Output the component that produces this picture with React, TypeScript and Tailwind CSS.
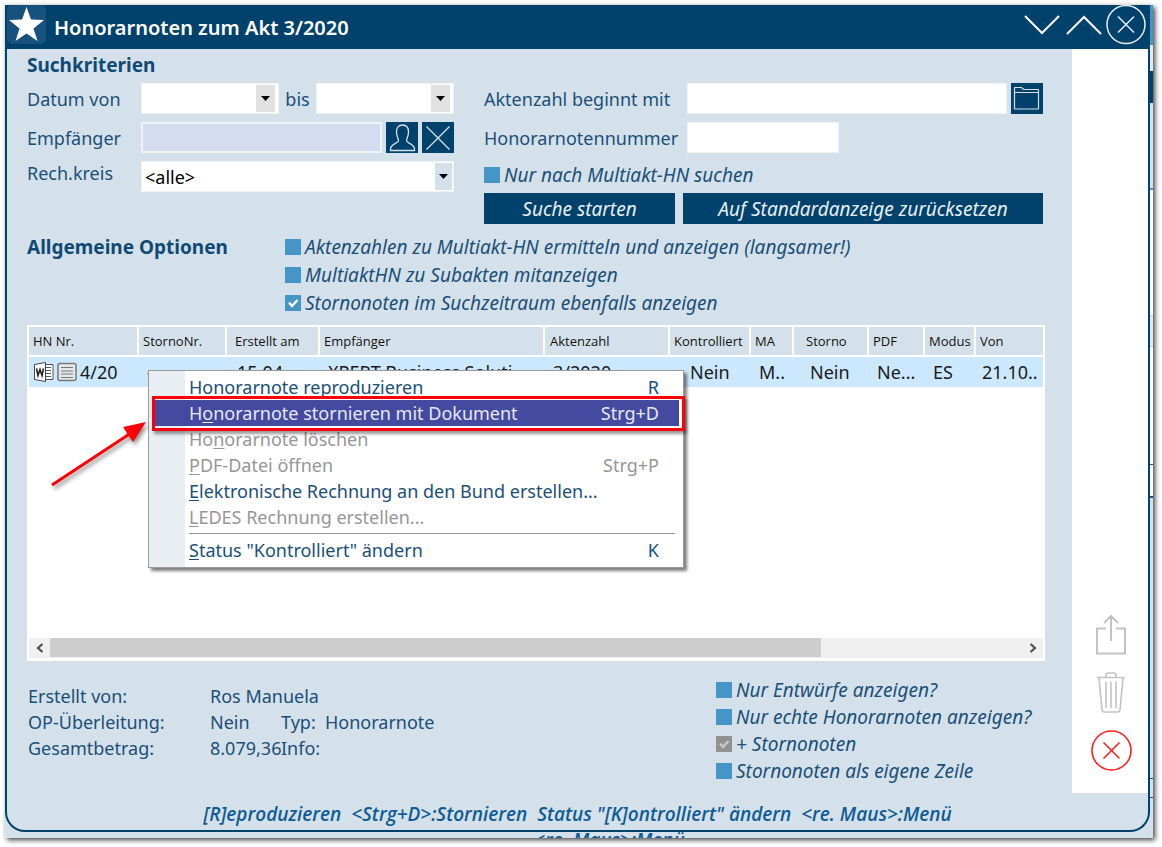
import React, { useState } from "react";

function Check({ label, checked = false, disabled = false }: { label: string; checked?: boolean; disabled?: boolean }) {
  const [on, setOn] = useState(checked);
  return (
    <label className="flex items-center gap-1 text-[19px] leading-6 italic whitespace-nowrap">
      <span className="grid shrink-0">
        <input
          type="checkbox"
          checked={on}
          disabled={disabled}
          onChange={(e) => setOn(e.target.checked)}
          className="col-start-1 row-start-1 size-4 appearance-none bg-[#4595c6] disabled:bg-[#919191]"
        />
        {on && (
          <svg viewBox="0 0 16 16" className="pointer-events-none col-start-1 row-start-1 size-4" fill="none">
            <path d="M4 7.5 7 11l5.5-6" stroke={disabled ? "#c8c8c8" : "#fff"} strokeWidth="2.4" />
          </svg>
        )}
      </span>
      {label}
    </label>
  );
}

function Dropdown({ label, value = "", tone = "date" }: { label: string; value?: string; tone?: "date" | "list" }) {
  return (
    <span className="relative block min-w-0 flex-1">
      <select aria-label={label} className="block h-[31px] w-full appearance-none border border-[#eef3f7] bg-white px-[3px] text-black">
        <option>{value}</option>
      </select>
      <span
        className={
          tone === "date"
            ? "pointer-events-none absolute inset-y-0.5 right-1 flex w-[19px] items-center justify-center bg-[#e1e1e1]"
            : "pointer-events-none absolute inset-y-0.5 right-0.5 flex w-[17px] items-center justify-center bg-[#d5e1ea]"
        }
      >
        <svg viewBox="0 0 9 5" className="h-[5px] w-[9px]">
          <path d="M0 0h9L4.500 5z" fill="#000" />
        </svg>
      </span>
    </span>
  );
}

function IconButton({ label, children }: { label: string; children: React.ReactNode }) {
  return (
    <button aria-label={label} className="flex h-[31px] w-8 shrink-0 items-center justify-center bg-[#00426b]">
      {children}
    </button>
  );
}

const columns = [
  { head: "HN Nr.", cell: "4/20", width: "w-[110px]", hp: "pl-1", cp: "pl-[5px]" },
  { head: "StornoNr.", cell: "-", width: "w-[88px]", hp: "pl-1", cp: "pl-2" },
  { head: "Erstellt am", cell: "15.04....", width: "w-[93px]", hp: "pl-2", cp: "pl-2.5" },
  { head: "Empfänger", cell: "XPERT Business Soluti...", width: "w-[225px]", hp: "pl-1", cp: "pl-2" },
  { head: "Aktenzahl", cell: "3/2020", width: "w-[125px]", hp: "pl-[5px]", cp: "pl-2" },
  { head: "Kontrolliert", cell: "Nein", width: "w-[81px]", hp: "pl-1", cp: "pl-5" },
  { head: "MA", cell: "M..", width: "w-[43px]", hp: "pl-1", cp: "pl-2" },
  { head: "Storno", cell: "Nein", width: "w-[75px]", hp: "pl-3", cp: "pl-4" },
  { head: "PDF", cell: "Ne...", width: "w-[56px]", hp: "pl-1", cp: "pl-2" },
  { head: "Modus", cell: "ES", width: "w-[51px]", hp: "pl-1", cp: "pl-2" },
  { head: "Von", cell: "21.10..", width: "", hp: "pl-1", cp: "pl-1.5" },
];

type Item = { pre: string; key: string; post: string; short?: string; off?: boolean; active?: boolean };

const items: Item[] = [
  { pre: "", key: "H", post: "onorarnote reproduzieren", short: "R" },
  { pre: "H", key: "o", post: "norarnote stornieren mit Dokument", short: "Strg+D", active: true },
  { pre: "Ho", key: "n", post: "orarnote löschen", off: true },
  { pre: "", key: "P", post: "DF-Datei öffnen", short: "Strg+P", off: true },
  { pre: "", key: "E", post: "lektronische Rechnung an den Bund erstellen..." },
  { pre: "", key: "L", post: "EDES Rechnung erstellen...", off: true },
];

function MenuItem({ item }: { item: Item }) {
  return (
    <button
      role="menuitem"
      disabled={item.off}
      className={
        "flex h-[26px] w-full items-center justify-between pr-5 pl-9 whitespace-nowrap " +
        (item.active ? "bg-[#444a9f] text-[#e6e8f5]" : item.off ? "text-[#969696]" : "text-[#1a4f78]")
      }
    >
      <span>
        {item.pre}
        <span className="underline underline-offset-2">{item.key}</span>
        {item.post}
      </span>
      <span>{item.short}</span>
    </button>
  );
}

function ContextMenu() {
  return (
    <div
      role="menu"
      className="absolute top-[45px] left-[121px] w-[536px] border border-[#9a9a9a] bg-[linear-gradient(to_right,#e9eef2_36px,#fff_36px)] px-1 pt-[3px] pb-1 shadow-[3px_3px_3px_rgba(0,0,0,0.5)]"
    >
      {items.map((item) => (
        <MenuItem key={item.post} item={item} />
      ))}
      <div className="mr-1 ml-9 flex h-[7px] items-center">
        <hr className="h-px w-full border-0 bg-[#969696]" />
      </div>
      <MenuItem item={{ pre: "", key: "S", post: 'tatus "Kontrolliert" ändern', short: "K" }} />
      <div className="pointer-events-none absolute top-[25px] -right-[2px] left-[3px] h-[35px] border-3 border-[#fb0006] shadow-[2px_3px_3px_rgba(0,0,0,0.4)]" />
    </div>
  );
}

function Results() {
  return (
    <section className="relative flex h-[336px] flex-col bg-white p-0.5">
      <table className="w-full table-fixed border-separate border-spacing-0 text-left whitespace-nowrap">
        <thead>
          <tr>
            {columns.map((c) => (
              <th
                key={c.head}
                className={`${c.width} ${c.hp} h-[30px] overflow-hidden border-r-2 border-b-2 border-white bg-[#d5e1ea] py-0 pr-0 font-['Open_Sans',sans-serif] text-[13px] font-normal text-[#111] last:border-r-0`}
              >
                {c.head}
              </th>
            ))}
          </tr>
        </thead>
        <tbody className="bg-[#cce8ff] text-[#1a1a1a]">
          <tr>
            {columns.map((c, i) => (
              <td key={c.head} className={`${c.cp} h-[30px] overflow-hidden py-0 pr-0`}>
                {i === 0 ? (
                  <span className="flex items-center gap-[3px]">
                    <svg viewBox="0 0 20 20" className="size-5 shrink-0" fill="none">
                      <path d="M11 2.500h8v15h-8" fill="#fff" stroke="#555" />
                      <path d="M12 5.500h5M12 8.500h5M12 11.500h5M12 14.500h5" stroke="#555" />
                      <path d="M.5 2.500 11.500.5v19L.5 17.500z" fill="#fff" stroke="#444" />
                      <path d="m2.500 6.500 1.500 7 2-6 2 6 1.500-7" stroke="#222" strokeWidth="1.600" />
                    </svg>
                    <svg viewBox="0 0 20 20" className="size-5 shrink-0" fill="none">
                      <rect x="1" y="1.500" width="18" height="17" rx="2" fill="#e4e8ec" stroke="#777" strokeWidth="1.500" />
                      <path d="M4 5.500h12M4 9h12M4 12h12M4 15.500h12" stroke="#777" strokeWidth="1.200" />
                    </svg>
                    {c.cell}
                  </span>
                ) : (
                  c.cell
                )}
              </td>
            ))}
          </tr>
        </tbody>
      </table>

      <div className="mt-auto mb-px flex h-5 bg-[#f0f0f0]">
        <button aria-label="Nach links" className="flex w-[21px] items-center justify-center">
          <svg viewBox="0 0 8 10" className="h-2.5 w-2" fill="none">
            <path d="M6.500 1 2 5l4.500 4" stroke="#505050" strokeWidth="2.200" />
          </svg>
        </button>
        <div className="flex-1">
          <div className="h-[19px] w-[79.3%] bg-[#cdcdcd]" />
        </div>
        <button aria-label="Nach rechts" className="flex w-[21px] items-center justify-center">
          <svg viewBox="0 0 8 10" className="h-2.5 w-2" fill="none">
            <path d="M1.500 1 6 5 1.500 9" stroke="#505050" strokeWidth="2.200" />
          </svg>
        </button>
      </div>

      <ContextMenu />
      <svg viewBox="0 0 100 72" className="pointer-events-none absolute top-[95px] left-[22px] h-[72px] w-[100px] drop-shadow-[2px_3px_2px_rgba(0,0,0,0.45)]">
        <path d="M3 65 82 13" stroke="#fb0006" strokeWidth="3" />
        <path d="M97 2 74 7l10 15z" fill="#fb0006" />
      </svg>
    </section>
  );
}

function Sidebar() {
  return (
    <aside className="flex w-[76px] shrink-0 flex-col items-center justify-end gap-[17px] bg-white pb-[22px] pl-0.5">
      <button aria-label="Exportieren">
        <svg viewBox="0 0 32 41" className="h-[41px] w-8" fill="none" stroke="#c3c3c3" strokeWidth="2">
          <path d="M11 14.500H2V39.500H30V14.500H21" />
          <path d="M16 27V2M9 9l7-7 7 7" />
        </svg>
      </button>
      <button aria-label="Löschen">
        <svg viewBox="0 0 30 41" className="h-[41px] w-[30px]" fill="none" stroke="#c3c3c3" strokeWidth="1.600">
          <path d="M1 5.500H29M3 6l3 32q.3 2 2 2h14q1.700 0 2-2l3-32" />
          <path d="M10 5V3q0-2 2-2h6q2 0 2 2v2M10 9.500V36M15 9.500V36M20 9.500V36" />
        </svg>
      </button>
      <button aria-label="Abbrechen">
        <svg viewBox="0 0 41 41" className="size-[41px]" fill="none" stroke="#fb2020" strokeWidth="1.600">
          <circle cx="20.500" cy="20.500" r="19.500" />
          <path d="m12.500 12.500 16 16M28.500 12.500l-16 16" />
        </svg>
      </button>
    </aside>
  );
}

export default function App() {
  return (
    <div className="flex min-h-screen bg-white pt-[5px] pr-[9px] pb-[9px] pl-[5px] font-['Noto_Sans','Open_Sans',sans-serif] text-[18px] leading-6 text-[#1a4f78]">
      <div className="flex min-w-0 flex-1 bg-[#d5e1ea] shadow-[2px_2px_5px_rgba(0,0,0,0.75)]">
        <div className="flex min-w-0 flex-1 flex-col">
          <div className="flex flex-1 flex-col overflow-hidden rounded-b-[20px] border-2 border-t-0 border-[#00426b]">
            <header className="flex h-11 items-center bg-[#00426b] text-white">
              <span className="flex size-[39px] items-center justify-center self-start rounded-[5px] bg-[#16527d]">
                <svg viewBox="0 0 37 37" className="size-[37px]">
                  <path d="M18.500 1 23 13.500 36 14l-10.500 8.500L29.500 35l-11-7.500L7.500 35l4-12.500L1 14l13-.5z" fill="#fff" />
                </svg>
              </span>
              <h1 className="ml-2 pt-0.5 text-[20px] font-semibold">Honorarnoten zum Akt 3/2020</h1>
              <div className="ml-auto flex items-center gap-1.5 self-start pr-0.5">
                <button aria-label="Weiter">
                  <svg viewBox="0 0 36 20" className="h-5 w-9" fill="none" stroke="#fff" strokeWidth="2">
                    <path d="m1 1 17 17L35 1" />
                  </svg>
                </button>
                <button aria-label="Zurück">
                  <svg viewBox="0 0 36 20" className="h-5 w-9" fill="none" stroke="#fff" strokeWidth="2">
                    <path d="M1 19 18 2l17 17" />
                  </svg>
                </button>
                <button aria-label="Schließen" className="-ml-0.5">
                  <svg viewBox="0 0 40 40" className="size-10" fill="none" stroke="#e6eef4" strokeWidth="1.500">
                    <circle cx="20" cy="19.500" r="19" />
                    <path d="m12 11.500 16 16M28 11.500l-16 16" />
                  </svg>
                </button>
              </div>
            </header>

            <div className="flex">
              <main className="min-w-0 flex-1 pt-1 pr-[27px] pl-5">
                <h2 className="h-[30px] text-[19px] font-bold text-[#0f4a75]">Suchkriterien</h2>
                <form className="flex gap-[30px] pr-0.5" onSubmit={(e) => e.preventDefault()}>
                  <div className="flex w-[427px] shrink-0 flex-col gap-2">
                    <div className="flex items-center">
                      <span className="w-[114px]">Datum von</span>
                      <Dropdown label="Datum von" />
                      <span className="w-[37px] text-center">bis</span>
                      <Dropdown label="Datum bis" />
                    </div>
                    <div className="flex items-center">
                      <label htmlFor="empf" className="w-[114px]">Empfänger</label>
                      <input id="empf" className="mr-1 h-[31px] min-w-0 flex-1 border-2 border-[#eef3f7] bg-[#d5dcf0] px-1" />
                      <IconButton label="Empfänger suchen">
                        <svg viewBox="0 0 32 31" className="h-[31px] w-8" fill="none" stroke="#d5e1ea" strokeWidth="1.300">
                          <path d="M12.500 18.500c0-2-2-4-2-8.500 0-4 2-7 6-7s6 3 6 7c0 4.500-2 6.500-2 8.500 0 3 8 3 8 8.500v1.500H4.500V27c0-5.500 8-5.500 8-8.500z" />
                        </svg>
                      </IconButton>
                      <span className="w-1" />
                      <IconButton label="Empfänger leeren">
                        <svg viewBox="0 0 32 31" className="h-[31px] w-8" fill="none" stroke="#d5e1ea" strokeWidth="1.300">
                          <path d="m4.500 4.500 23 23M27.500 4.500l-23 23" />
                        </svg>
                      </IconButton>
                    </div>
                    <div className="flex">
                      <span className="w-[114px]">Rech.kreis</span>
                      <Dropdown label="Rech.kreis" value="<alle>" tone="list" />
                    </div>
                  </div>

                  <div className="flex min-w-0 flex-1 flex-col">
                    <div className="flex items-center">
                      <label htmlFor="akt" className="w-[203px]">Aktenzahl beginnt mit</label>
                      <input id="akt" className="mr-1 h-[31px] min-w-0 flex-1 border border-[#eef3f7] bg-white px-1" />
                      <IconButton label="Akt wählen">
                        <svg viewBox="0 0 32 31" className="h-[31px] w-8" fill="none" stroke="#d5e1ea" strokeWidth="1.200">
                          <path d="M3.500 25.500V5q0-.5.500-.5h6.500l2 2H27q.5 0 .5.500v18.500q0 .5-.5.500H4q-.5 0-.5-.5zM4 9.500h23" />
                        </svg>
                      </IconButton>
                    </div>
                    <div className="mt-2 flex items-center">
                      <label htmlFor="hn" className="w-[203px]">Honorarnotennummer</label>
                      <input id="hn" className="h-[31px] w-[152px] border border-[#eef3f7] bg-white px-1" />
                    </div>
                    <div className="flex h-10 items-end pb-1.5">
                      <Check label="Nur nach Multiakt-HN suchen" />
                    </div>
                    <div className="flex gap-2 text-[19px] text-[#e8eff4] italic">
                      <button className="h-[31px] w-[191px] bg-[#00426b]">Suche starten</button>
                      <button className="h-[31px] flex-1 bg-[#00426b]">Auf Standardanzeige zurücksetzen</button>
                    </div>
                  </div>
                </form>

                <section className="mt-[11px] mb-2.5 flex">
                  <h2 className="w-[258px] text-[19px] font-bold text-[#0f4a75]">Allgemeine Optionen</h2>
                  <div className="flex flex-col gap-1">
                    <Check label="Aktenzahlen zu Multiakt-HN ermitteln und anzeigen (langsamer!)" />
                    <Check label="MultiaktHN zu Subakten mitanzeigen" />
                    <Check label="Stornonoten im Suchzeitraum ebenfalls anzeigen" checked />
                  </div>
                </section>

                <Results />

                <section className="mt-[17px] flex justify-between pb-2.5 pl-px">
                  <dl className="mt-[5px] grid grid-cols-[182px_71px_44px_auto] auto-rows-[26px] items-center whitespace-nowrap">
                    <dt>Erstellt von:</dt>
                    <dd className="col-span-3">Ros Manuela</dd>
                    <dt>OP-Überleitung:</dt>
                    <dd>Nein</dd>
                    <dt>Typ:</dt>
                    <dd>Honorarnote</dd>
                    <dt>Gesamtbetrag:</dt>
                    <dd className="overflow-hidden">8.079,36</dd>
                    <dt>Info:</dt>
                    <dd />
                  </dl>
                  <div className="flex w-[329px] flex-col gap-[3px]">
                    <Check label="Nur Entwürfe anzeigen?" />
                    <Check label="Nur echte Honorarnoten anzeigen?" />
                    <Check label="+ Stornonoten" checked disabled />
                    <Check label="Stornonoten als eigene Zeile" />
                  </div>
                </section>
              </main>
              <Sidebar />
            </div>

            <footer className="flex flex-1 items-center justify-center pt-1 font-['Open_Sans','Noto_Sans',sans-serif] text-[19px] font-semibold whitespace-pre text-[#0f5c94] italic">
              {'[R]eproduzieren  <Strg+D>:Stornieren  Status "[K]ontrolliert" ändern  <re. Maus>:Menü'}
            </footer>
          </div>
          <div className="h-1.5 overflow-hidden pl-16 text-center font-['Open_Sans','Noto_Sans',sans-serif] text-[19px] leading-4 font-semibold text-[#0f5c94] italic">
            {"<re. Maus>:Menü"}
          </div>
        </div>

        <div className="flex w-[3px] shrink-0 flex-col">
          <div className="h-10 bg-[#4595c6]" />
          <div className="h-[26px] bg-[#e3eaf0]" />
          <div className="h-8 bg-[#00426b]" />
          <div className="h-[87px] border-b-2 border-[#4595c6]" />
          <div className="h-[125px] bg-white" />
          <div className="h-8 border-y border-[#b5cbe0] bg-[#e1e8ee]" />
          <div className="h-[117px] bg-white" />
          <div className="h-[34px] border-t border-b-2 border-[#1a4f78] bg-white" />
          <div className="h-[280px]" />
          <div className="h-5 border-y border-[#1a4f78]" />
        </div>
      </div>
    </div>
  );
}
